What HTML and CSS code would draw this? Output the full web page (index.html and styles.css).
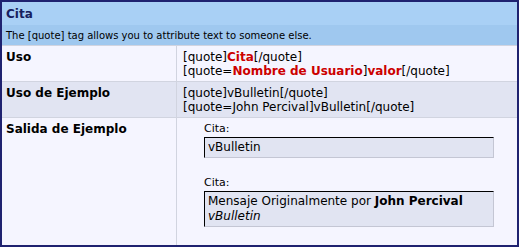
FILE: index.html
```html
<!DOCTYPE html>
<html lang="es">
<head>
    <meta charset="UTF-8">
    <title>Cita</title>
    <link rel="stylesheet" href="styles.css">
</head>
<body>
    <div class="tborder">
        <div class="tcat">Cita</div>
        <div class="thead">The [quote] tag allows you to attribute text to someone else.</div>
        <div class="bbrow alt1">
            <div class="label">Uso</div>
            <div class="code">
                [quote]<span class="hl">Cita</span>[/quote]<br>
                [quote=<span class="hl">Nombre de Usuario</span>]<span class="hl">valor</span>[/quote]
            </div>
        </div>
        <div class="bbrow alt2">
            <div class="label">Uso de Ejemplo</div>
            <div class="code">
                [quote]vBulletin[/quote]<br>
                [quote=John Percival]vBulletin[/quote]
            </div>
        </div>
        <div class="bbrow alt1 last">
            <div class="label">Salida de Ejemplo</div>
            <div class="code output">
                <div class="quote">
                    <div class="smallfont">Cita:</div>
                    <div class="quotebox">vBulletin</div>
                </div>
                <div class="quote">
                    <div class="smallfont">Cita:</div>
                    <div class="quotebox">
                        Mensaje Originalmente por <b>John Percival</b><br>
                        <i>vBulletin</i>
                    </div>
                </div>
            </div>
        </div>
    </div>
</body>
</html>
```

FILE: styles.css
```css
body {
    margin: 0;
    background: #ffffff;
    font-family: "DejaVu Sans", Verdana, sans-serif;
    font-size: 12px;
    color: #000000;
}
.tborder {
    width: 515px;
    height: 243px;
    border: 2px solid #1f2270;
    background: #d1d4e0;
    display: flex;
    flex-direction: column;
    gap: 1px;
}
.tcat {
    background: #a9d0f5;
    color: #17205e;
    font-weight: bold;
    font-size: 12px;
    padding: 5px 4px 6px;
    height: 12px;
}
.thead {
    background: #9fc8ef;
    font-size: 10px;
    padding: 5px 4px 4px;
    height: 12px;
    margin-top: -1px;
}
.bbrow {
    display: grid;
    grid-template-columns: 174px 1fr;
    gap: 1px;
}
.bbrow.last { flex: 1; }
.alt1 > div { background: #f5f5ff; }
.alt2 > div { background: #e1e4f2; }
.label {
    font-weight: bold;
    padding: 4px 4px 3px;
}
.code {
    padding: 4px 5px 3px 6px;
    line-height: 14px;
}
.hl {
    color: #cc0000;
    font-weight: bold;
}
.output {
    padding: 4px 0 0 27px;
}
.quote {
    margin-bottom: 18px;
}
.smallfont {
    font-size: 11px;
    line-height: 13px;
    margin-bottom: 2px;
}
.quotebox {
    width: 282px;
    background: #e1e4f2;
    border: 1px solid #c4c6d4;
    border-top-color: #000000;
    border-left-color: #000000;
    padding: 2px 3px;
    line-height: 15px;
}
```
